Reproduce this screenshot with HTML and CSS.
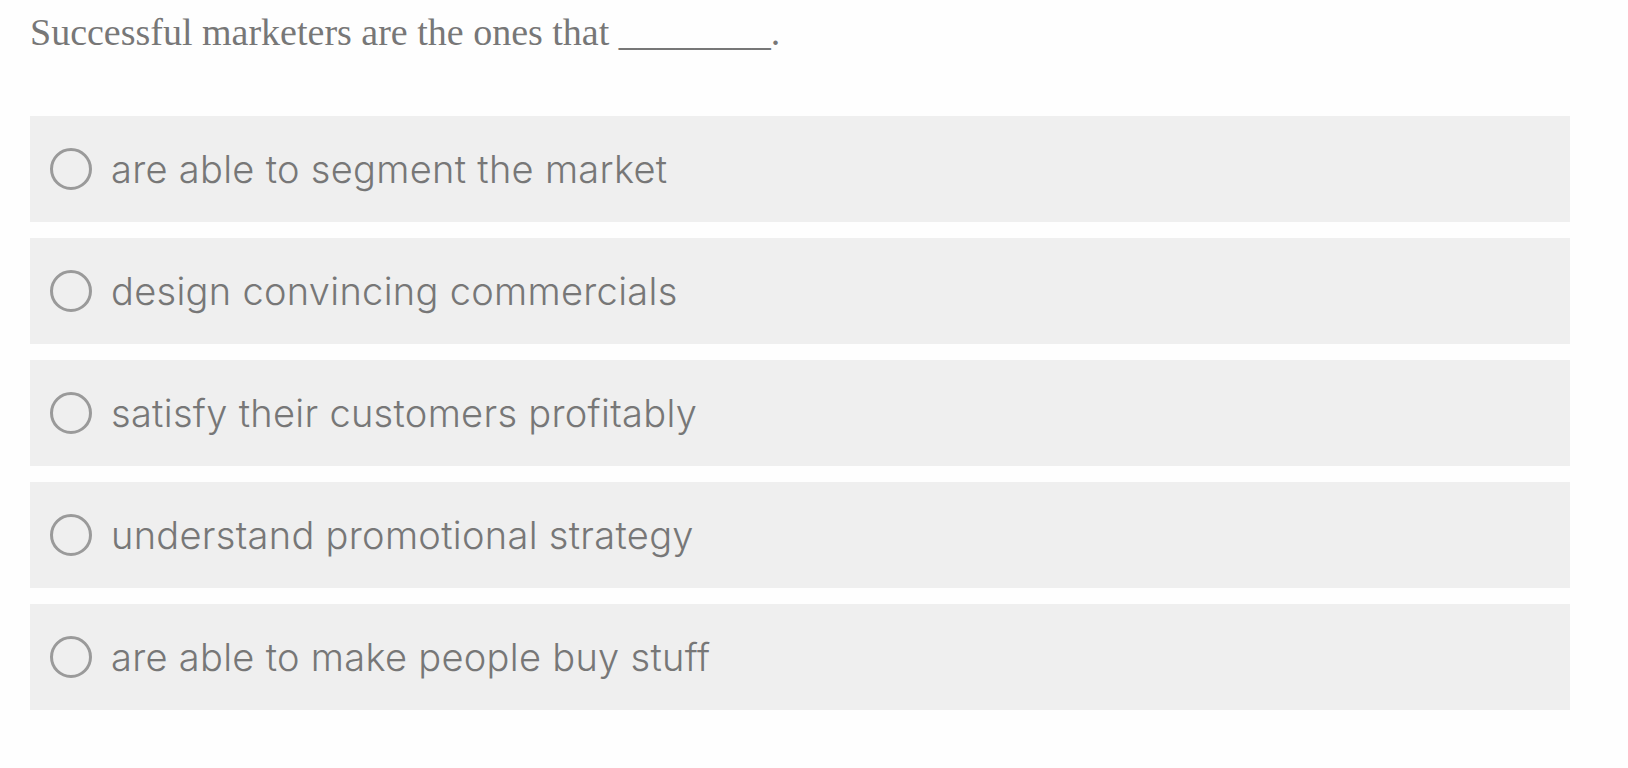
FILE: index.html
```html
<!DOCTYPE html>
<html>
<head>
<meta charset="utf-8">
<link rel="stylesheet" href="styles.css">
</head>
<body>
<div class="quiz">
  <p class="question">Successful marketers are the ones that ________.</p>
  <ul class="options">
    <li class="option"><span class="radio"></span><span class="label">are able to segment the market</span></li>
    <li class="option"><span class="radio"></span><span class="label">design convincing commercials</span></li>
    <li class="option"><span class="radio"></span><span class="label">satisfy their customers profitably</span></li>
    <li class="option"><span class="radio"></span><span class="label">understand promotional strategy</span></li>
    <li class="option"><span class="radio"></span><span class="label">are able to make people buy stuff</span></li>
  </ul>
</div>
</body>
</html>
```
FILE: styles.css
```css
html, body {
  margin: 0;
  padding: 0;
  background: #fefefe;
}
.quiz {
  width: 1540px;
  padding: 0 0 0 30px;
}
.question {
  margin: 0;
  padding-top: 10px;
  font-family: "Liberation Serif", "Times New Roman", serif;
  font-size: 38px;
  line-height: 44px;
  color: #777;
}
.options {
  list-style: none;
  margin: 62px 0 0 0;
  padding: 0;
  display: flex;
  flex-direction: column;
  gap: 16px;
}
.option {
  height: 106px;
  background: #efefef;
  display: flex;
  align-items: center;
  padding-left: 20px;
}
.radio {
  width: 36px;
  height: 36px;
  border: 3px solid #9a9a9a;
  border-radius: 50%;
  flex: none;
}
.label {
  margin-left: 19px;
  font-family: Inter, "Noto Sans", sans-serif;
  font-weight: 300;
  font-size: 38px;
  letter-spacing: 0.3px;
  color: #777;
}
```
